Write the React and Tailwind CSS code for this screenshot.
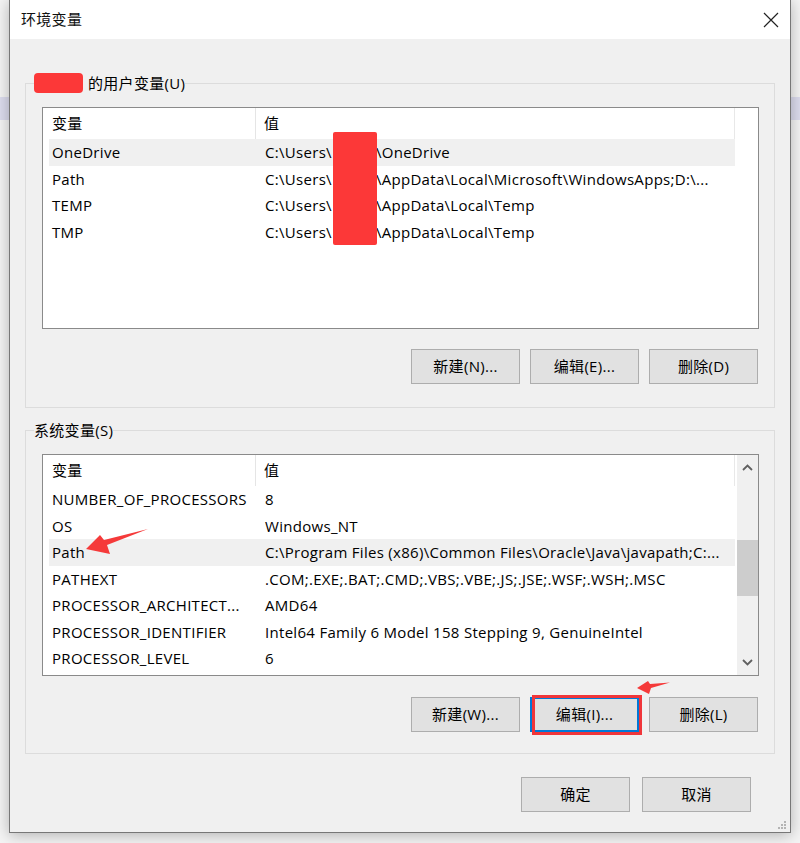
import React from 'react';

// Windows "环境变量" dialog, with the annotation marks of the screenshot
const userVars = [
    { name: 'OneDrive', pre: 'C:\\Users\\', post: '\\OneDrive' },
    { name: 'Path', pre: 'C:\\Users\\', post: '\\AppData\\Local\\Microsoft\\WindowsApps;D:\\...' },
    { name: 'TEMP', pre: 'C:\\Users\\', post: '\\AppData\\Local\\Temp' },
    { name: 'TMP', pre: 'C:\\Users\\', post: '\\AppData\\Local\\Temp' },
];

const systemVars = [
    { name: 'NUMBER_OF_PROCESSORS', value: '8' },
    { name: 'OS', value: 'Windows_NT' },
    { name: 'Path', value: 'C:\\Program Files (x86)\\Common Files\\Oracle\\Java\\javapath;C:...' },
    { name: 'PATHEXT', value: '.COM;.EXE;.BAT;.CMD;.VBS;.VBE;.JS;.JSE;.WSF;.WSH;.MSC' },
    { name: 'PROCESSOR_ARCHITECT...', value: 'AMD64' },
    { name: 'PROCESSOR_IDENTIFIER', value: 'Intel64 Family 6 Model 158 Stepping 9, GenuineIntel' },
    { name: 'PROCESSOR_LEVEL', value: '6' },
];

const Button = ({ children, focused = false }) => (
    <button
        className={
            'w-[109px] h-[35px] bg-[#e1e1e1] text-[15px] text-black leading-none ' +
            (focused ? 'border-2 border-[#0078d7]' : 'border border-[#adadad]')
        }
    >
        {children}
    </button>
);

const Chevron = ({ down = false }) => (
    <svg width="11" height="7" viewBox="0 0 11 7">
        <polyline
            points={down ? '1,1 5.5,5.5 10,1' : '1,6 5.5,1.5 10,6'}
            fill="none"
            stroke="#606060"
            strokeWidth="1.8"
        />
    </svg>
);

const VarList = ({ rows, selected, scrollbar = false }) => (
    <div className="h-[222px] border border-[#8a8a8a] bg-white flex overflow-hidden">
        <div className="w-[693px] flex flex-col">
            <div className="flex h-[31px] w-[692px] items-center border-r border-[#e8e8e8]">
                <div className="w-[213px] h-full pl-[9px] flex items-center border-r border-[#e5e5e5]">变量</div>
                <div className="pl-[8px]">值</div>
            </div>
            {rows.map((row, i) => (
                <div
                    key={row.name}
                    className={
                        'flex ml-[6px] w-[686px] h-[26.5px] shrink-0 items-center whitespace-nowrap ' +
                        (i === selected ? 'bg-[#f0f0f0]' : '')
                    }
                >
                    <div className="w-[213px] pl-[3px] overflow-hidden">{row.name}</div>
                    <div className="flex-1 pl-[3px] overflow-hidden">
                        {row.value ?? (
                            <>
                                {row.pre}
                                <span className="inline-block w-[44px]" />
                                {row.post}
                            </>
                        )}
                    </div>
                </div>
            ))}
        </div>
        {scrollbar && (
            <div className="ml-[1px] w-[21px] bg-[#f0f0f0] flex flex-col">
                <div className="h-[25px] flex items-center justify-center">
                    <Chevron />
                </div>
                <div className="flex-1">
                    <div className="mt-[60px] h-[56px] bg-[#cdcdcd]" />
                </div>
                <div className="h-[25px] flex items-center justify-center">
                    <Chevron down />
                </div>
            </div>
        )}
    </div>
);

const Group = ({ label, children, className = '' }) => (
    <fieldset className={'border border-[#dcdcdc] px-0 ' + className}>
        <legend className="ml-[8px] px-0 text-[15px] leading-[20px] text-black">{label}</legend>
        <div className="pl-[16px] pr-[15px]">{children}</div>
    </fieldset>
);

export default function App() {
    return (
        <div className="relative w-[800px] h-[843px] overflow-hidden bg-[#f4f4f4] font-['Open_Sans','Noto_Sans_CJK_SC',sans-serif] text-[15px] tracking-[0.3px] text-black">
            {/* desktop behind the dialog */}
            <div className="mt-[97px] h-[23px] bg-[#dcdcee]" />

            {/* dialog window */}
            <div className="absolute left-[9px] top-0 w-[782px] h-[833px] border-x border-b border-[#777777] bg-[#f0f0f0] shadow-[0_2px_14px_rgba(0,0,0,0.28)] flex flex-col">
                <div className="h-[39px] shrink-0 bg-white flex items-center justify-between pl-[11px] pr-[11px]">
                    <span className="text-[15px] text-[#111]">环境变量</span>
                    <svg width="16" height="16" viewBox="0 0 16 16">
                        <path d="M1 1 L15 15 M15 1 L1 15" stroke="#222" strokeWidth="1.2" />
                    </svg>
                </div>

                <div className="flex-1 px-[15px] pt-[34px] flex flex-col">
                    <Group
                        label={
                            <span className="flex items-center">
                                <span className="inline-block w-[49px] h-[20px] rounded-[4px] bg-[#fc3838]" />
                                <span className="ml-[5px]">的用户变量(U)</span>
                            </span>
                        }
                        className="pb-[23px]"
                    >
                        <div className="mt-[14px]">
                            <VarList rows={userVars} selected={0} />
                        </div>
                        <div className="mt-[20px] flex justify-end gap-[10px] pr-[1px]">
                            <Button>新建(N)...</Button>
                            <Button>编辑(E)...</Button>
                            <Button>删除(D)</Button>
                        </div>
                    </Group>

                    <Group label="系统变量(S)" className="mt-[12px] pb-[21px]">
                        <div className="mt-[14px]">
                            <VarList rows={systemVars} selected={2} scrollbar />
                        </div>
                        <div className="mt-[21px] flex justify-end gap-[10px] pr-[1px]">
                            <Button>新建(W)...</Button>
                            <Button focused>编辑(I)...</Button>
                            <Button>删除(L)</Button>
                        </div>
                    </Group>

                    <div className="mt-[23px] flex justify-end gap-[12px] pr-[24px]">
                        <Button>确定</Button>
                        <Button>取消</Button>
                    </div>
                </div>

                {/* resize grip */}
                <svg className="absolute right-[4px] bottom-[3px]" width="9" height="9" viewBox="0 0 9 9">
                    <rect x="7" y="1" width="2" height="2" fill="#b4b4b4" />
                    <rect x="4" y="4" width="2" height="2" fill="#b4b4b4" />
                    <rect x="7" y="4" width="2" height="2" fill="#b4b4b4" />
                    <rect x="1" y="7" width="2" height="2" fill="#b4b4b4" />
                    <rect x="4" y="7" width="2" height="2" fill="#b4b4b4" />
                    <rect x="7" y="7" width="2" height="2" fill="#b4b4b4" />
                </svg>
            </div>

            {/* annotation: redacted user name */}
            <div className="absolute left-[333px] top-[132px] w-[44px] h-[113px] rounded-[2px] bg-[#fc3838]" />

            {/* annotation: red box round the edit button */}
            <div className="absolute left-[532px] top-[695px] w-[110px] h-[40px] border-[3px] border-[#f0363a]" />

            {/* annotation: arrows */}
            <svg className="absolute left-0 top-0 pointer-events-none" width="800" height="843" viewBox="0 0 800 843">
                <polygon points="148,529 104,540 100,535 86,549 110,554 107,545" fill="#f53a3a" />
                <polygon points="670,682.5 650,684 648,681 637,688 649,694 651,688" fill="#f53a3a" />
            </svg>
        </div>
    );
}
